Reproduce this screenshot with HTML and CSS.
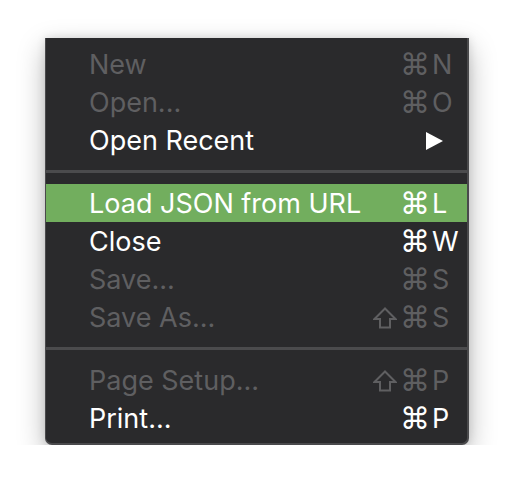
FILE: index.html
```html
<!DOCTYPE html>
<html>
<head>
<meta charset="utf-8">
<link rel="stylesheet" href="styles.css">
</head>
<body>
<div class="menu">
  <div class="item disabled"><span class="label">New</span><span class="mod"><span class="cmd">⌘</span></span><span class="key">N</span></div>
  <div class="item disabled"><span class="label">Open...</span><span class="mod"><span class="cmd">⌘</span></span><span class="key">O</span></div>
  <div class="item"><span class="label">Open Recent</span><span class="mod"></span><span class="key"><span class="arrow"></span></span></div>
  <div class="sep"></div>
  <div class="item active"><span class="label">Load JSON from URL</span><span class="mod"><span class="cmd">⌘</span></span><span class="key">L</span></div>
  <div class="item"><span class="label">Close</span><span class="mod"><span class="cmd">⌘</span></span><span class="key">W</span></div>
  <div class="item disabled"><span class="label">Save...</span><span class="mod"><span class="cmd">⌘</span></span><span class="key">S</span></div>
  <div class="item disabled"><span class="label">Save As...</span><span class="mod"><svg class="shift" viewBox="0 0 24 22" width="24" height="22"><path d="M12 1.5 L1.5 12 H7 V20.5 H17 V12 H22.5 Z" fill="none" stroke="currentColor" stroke-width="2" stroke-linejoin="miter"/></svg><span class="cmd">⌘</span></span><span class="key">S</span></div>
  <div class="sep"></div>
  <div class="item disabled"><span class="label">Page Setup...</span><span class="mod"><svg class="shift" viewBox="0 0 24 22" width="24" height="22"><path d="M12 1.5 L1.5 12 H7 V20.5 H17 V12 H22.5 Z" fill="none" stroke="currentColor" stroke-width="2" stroke-linejoin="miter"/></svg><span class="cmd">⌘</span></span><span class="key">P</span></div>
  <div class="item"><span class="label">Print...</span><span class="mod"><span class="cmd">⌘</span></span><span class="key">P</span></div>
</div>
</body>
</html>
```
FILE: styles.css
```css
html, body {
  margin: 0;
  padding: 0;
  background: #ffffff;
}
body {
  padding: 38px 0 0 45px;
}
.menu {
  width: 421px;
  background: #2a2a2c;
  border: 1px solid #4a4a4c;
  border-top: none;
  border-right-width: 2px;
  border-bottom-width: 2px;
  border-radius: 0 0 7px 7px;
  padding: 7px 0 6px;
  box-shadow: 0 10px 28px rgba(0, 0, 0, 0.28), 0 0 10px rgba(0, 0, 0, 0.12);
  font-family: Inter, "DejaVu Sans", sans-serif;
  font-size: 27px;
  color: #ffffff;
}
.item {
  display: grid;
  grid-template-columns: 1fr auto 29px;
  align-items: center;
  height: 38px;
  padding: 0 6px 0 43px;
}
.item.disabled {
  color: #5f5f61;
}
.item.active {
  background: #72ae5e;
}
.mod {
  display: flex;
  align-items: center;
  justify-content: flex-end;
  padding-right: 2px;
  height: 38px;
}
.cmd {
  font-family: "DejaVu Sans", sans-serif;
  font-size: 30px;
  line-height: 1;
  display: block;
  margin-top: 1px;
}
.shift {
  display: block;
  margin-right: 3px;
  margin-top: 1px;
}
.key {
  display: flex;
  align-items: center;
}
.arrow {
  width: 0;
  height: 0;
  margin-top: 2px;
  border-top: 9.5px solid transparent;
  border-bottom: 9.5px solid transparent;
  border-left: 17px solid #ffffff;
  margin-left: -6px;
}
.sep {
  height: 3px;
  background: #4b4b4d;
  margin: 11px 0 11px;
}
```
